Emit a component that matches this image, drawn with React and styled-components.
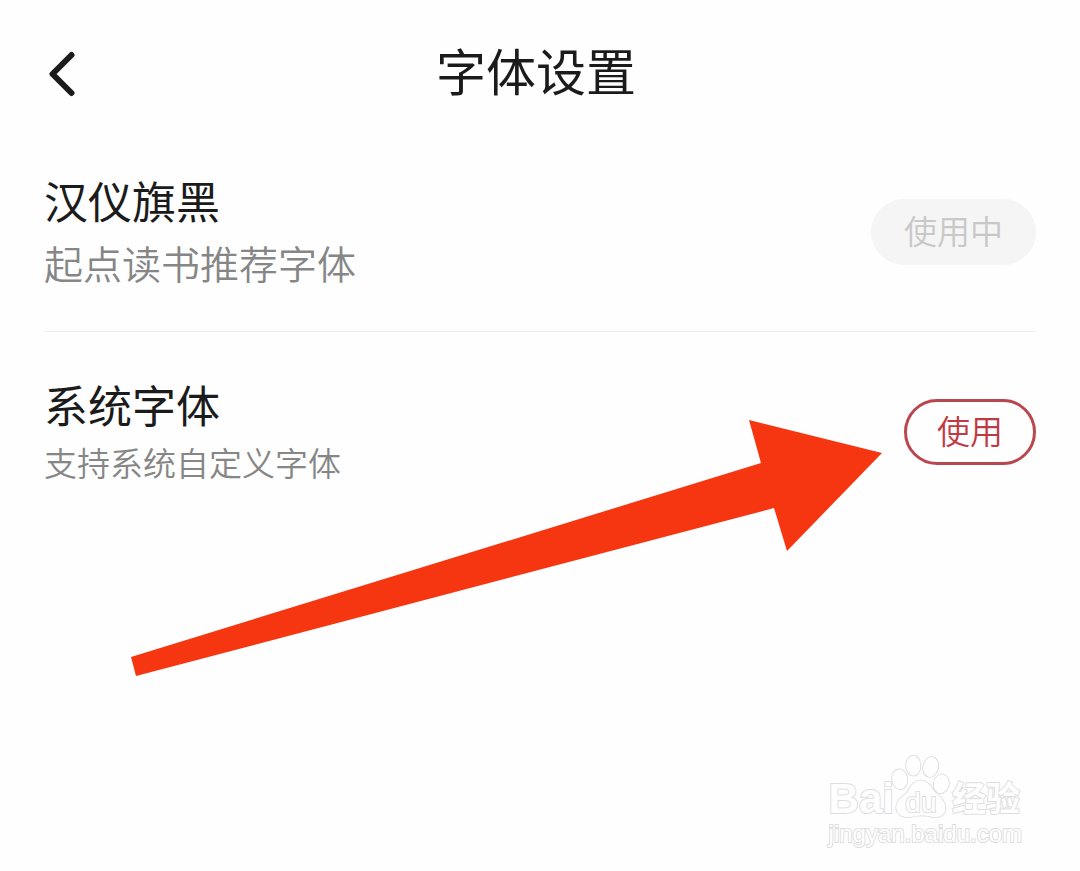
import { useState } from "react";
import styled, { createGlobalStyle } from "styled-components";

const GlobalStyle = createGlobalStyle`
  body {
    margin: 0;
    background: #fefefe;
    font-family: "Noto Sans CJK SC", sans-serif;
  }
`;

const Page = styled.div`
  position: relative;
  box-sizing: border-box;
  min-height: 100vh;
`;

const Header = styled.header`
  display: grid;
  grid-template-columns: 1fr auto 1fr;
  align-items: center;
  box-sizing: border-box;
  height: 132px;
  padding: 16px 44px 0 36px;
`;

const BackButton = styled.button`
  justify-self: start;
  display: flex;
  padding: 12px;
  border: none;
  background: none;
  color: #1b1b1b;
  cursor: pointer;
`;

const Title = styled.h1`
  margin: 0 0 10px;
  font-size: 50px;
  font-weight: 400;
  line-height: 72px;
  color: #1b1b1b;
`;

const FontList = styled.ul`
  list-style: none;
  margin: 0;
  padding: 0 44px;
`;

const FontRow = styled.li`
  display: flex;
  align-items: center;
  justify-content: space-between;
  box-sizing: border-box;
  min-height: 200px;

  &:not(:last-child) {
    border-bottom: 1px solid #eeeeee;
  }
`;

const FontInfo = styled.div``;

const FontName = styled.h2`
  margin: 0;
  font-size: 44px;
  font-weight: 400;
  line-height: 60px;
  color: #1b1b1b;
`;

const FontNote = styled.p`
  margin: 0;
  font-size: ${({ $large }) => ($large ? "39px" : "33px")};
  line-height: ${({ $large }) => ($large ? "64px" : "56px")};
  font-weight: 350;
  color: #868686;
`;

const UseButton = styled.button`
  box-sizing: border-box;
  height: 66px;
  padding: 0 30px 4px;
  border: 3px solid ${({ $active }) => ($active ? "#f5f5f5" : "#b9474f")};
  border-radius: 33px;
  background: ${({ $active }) => ($active ? "#f5f5f5" : "transparent")};
  color: ${({ $active }) => ($active ? "#c8c8c8" : "#c03a43")};
  font-family: inherit;
  font-size: 33px;
  font-weight: 350;
  line-height: 48px;
  cursor: pointer;
`;

// Sits over the list and points at the second row's button
const Arrow = styled.svg`
  position: absolute;
  top: 419px;
  right: 197px;
  pointer-events: none;
`;

const Watermark = styled.div`
  position: absolute;
  right: 58px;
  bottom: 22px;
  color: #fefefe;
  font-family: "Liberation Sans", "Noto Sans CJK SC", sans-serif;
  -webkit-text-stroke: 2px #dedede;
  paint-order: stroke fill;
  pointer-events: none;
`;

const Brand = styled.div`
  display: flex;
  align-items: flex-end;
  font-size: 42px;
  font-weight: 700;
  line-height: 40px;
`;

const Paw = styled.span`
  position: relative;
  display: flex;
  margin: 0 2px 0 -2px;
`;

const PawText = styled.span`
  position: absolute;
  left: 0;
  right: 0;
  bottom: 2px;
  text-align: center;
  font-size: 28px;
  font-weight: 400;
  line-height: 28px;
`;

const BrandSuffix = styled.span`
  font-size: 34px;
`;

const Site = styled.div`
  font-size: 24px;
  line-height: 30px;
`;

const fonts = [
  { id: "hanyi", name: "汉仪旗黑", note: "起点读书推荐字体", large: true },
  { id: "system", name: "系统字体", note: "支持系统自定义字体", large: false },
];

const App = () => {
  const [current, setCurrent] = useState("hanyi");

  return (
    <>
      <GlobalStyle />
      <Page>
        <Header>
          <BackButton aria-label="返回">
            <svg width="28" height="46" viewBox="0 0 28 46" fill="none"
              stroke="currentColor" strokeWidth="6" strokeLinecap="round" strokeLinejoin="round"
            >
              <path d="M23.5 4 L4.5 23 L23.5 42" />
            </svg>
          </BackButton>
          <Title>字体设置</Title>
        </Header>

        <FontList>
          {fonts.map((item) => (
            <FontRow key={item.id}>
              <FontInfo>
                <FontName>{item.name}</FontName>
                <FontNote $large={item.large}>{item.note}</FontNote>
              </FontInfo>
              <UseButton $active={item.id === current} onClick={() => setCurrent(item.id)}>
                {item.id === current ? "使用中" : "使用"}
              </UseButton>
            </FontRow>
          ))}
        </FontList>

        <Arrow width="752" height="133" viewBox="0 0 752 133" overflow="visible" aria-hidden="true">
          <path
            d="M618 1 L751 34 L656 132 L643 89 L5 257 L0 238 L630 44 Z"
            fill="#f53611"
          />
        </Arrow>

        <Watermark>
          <Brand>
            <span>Bai</span>
            <Paw>
              <svg width="58" height="66" viewBox="2 0 58 66" overflow="visible"
                fill="#fefefe" stroke="#d8d8d8" strokeWidth="1.5"
              >
                <ellipse cx="9.7" cy="26.3" rx="7.7" ry="10" transform="rotate(-8 9.7 26.3)" />
                <ellipse cx="23.3" cy="12.7" rx="7.2" ry="10" />
                <ellipse cx="40.7" cy="14" rx="7.5" ry="10" transform="rotate(12 40.7 14)" />
                <ellipse cx="51.3" cy="30.7" rx="7.5" ry="9.5" transform="rotate(12 51.3 30.7)" />
                <path d="M30.5 27.5 C38.5 27.5 42 35 46 40 C52 46 55.5 49 55.5 56 C54.5 63 48.5 65 42.5 64 C34.5 62 27.5 62 20.5 64 C12.5 65 6.2 62 6.2 54 C6.2 47 12.5 44 16.5 40 C20.5 34 23.5 27.5 30.5 27.5 Z" />
              </svg>
              <PawText>du</PawText>
            </Paw>
            <BrandSuffix>经验</BrandSuffix>
          </Brand>
          <Site>jingyan.baidu.com</Site>
        </Watermark>
      </Page>
    </>
  );
};

export default App;
